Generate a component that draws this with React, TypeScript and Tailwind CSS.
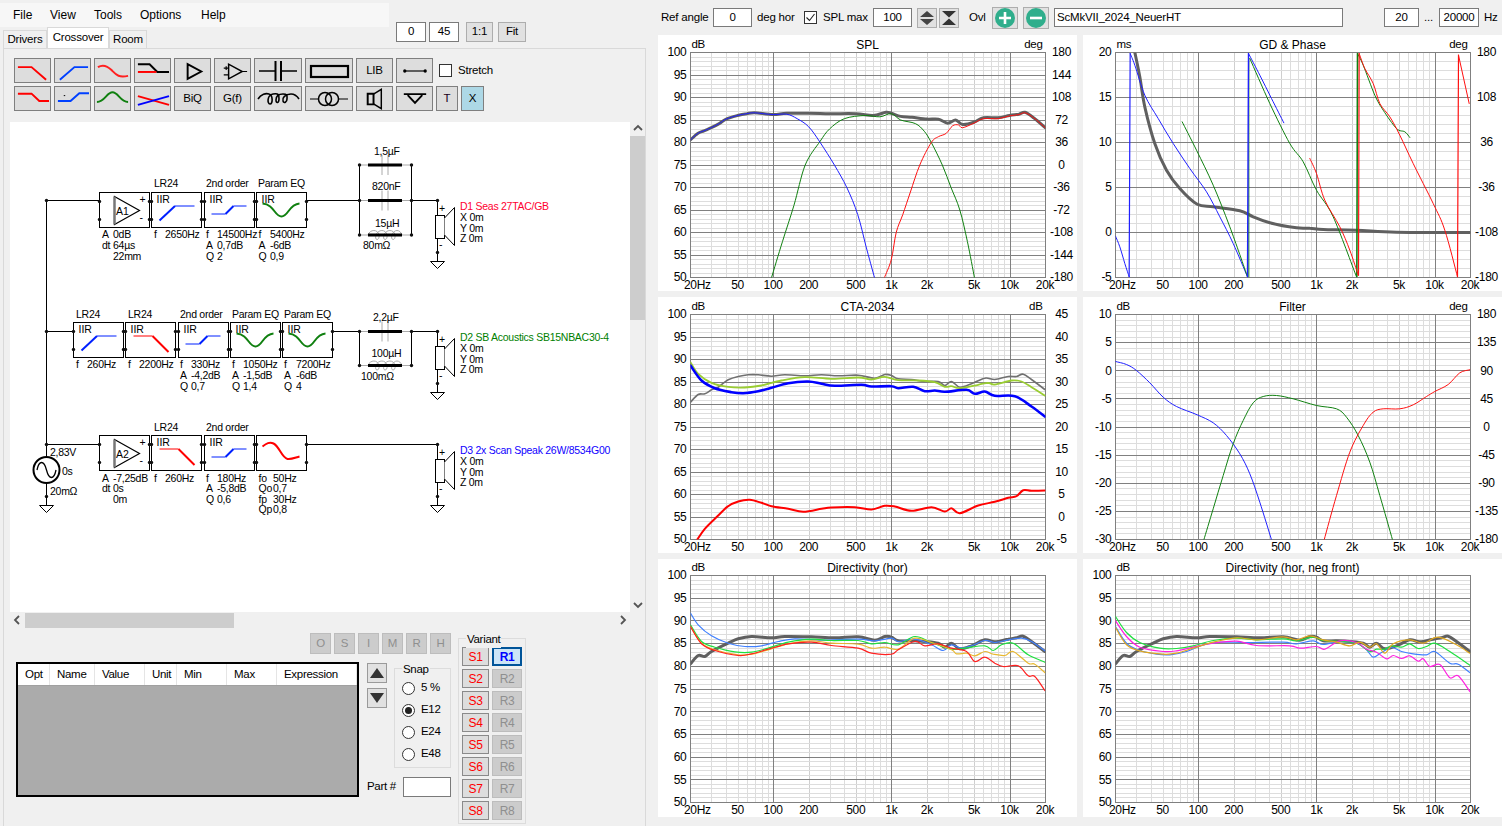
import type { ReactNode } from "react"

type Pt = [number, number]

interface Curve {
  pts: Pt[]
  color: string
  w?: number
}

interface ChartProps {
  title: string
  leftUnit: string
  rightUnit?: string
  left: number[]
  right?: number[]
  plotTop: number
  plotH: number
  height: number
  divs: number
  zy0: number
  curves: Curve[]
  id: string
}

const PL = 32.5
const PW = 355

function smooth(pts: Pt[]) {
  if (pts.length < 3) return `M${pts.map((p) => p.join(",")).join("L")}`
  let d = `M${pts[0][0]},${pts[0][1]}`
  for (let i = 0; i < pts.length - 1; i++) {
    const p0 = pts[i - 1] || pts[i]
    const p1 = pts[i]
    const p2 = pts[i + 1]
    const p3 = pts[i + 2] || p2
    const c1x = p1[0] + (p2[0] - p0[0]) / 6
    const c1y = p1[1] + (p2[1] - p0[1]) / 6
    const c2x = p2[0] - (p3[0] - p1[0]) / 6
    const c2y = p2[1] - (p3[1] - p1[1]) / 6
    d += `C${c1x.toFixed(1)},${c1y.toFixed(1)} ${c2x.toFixed(1)},${c2y.toFixed(1)} ${p2[0].toFixed(1)},${p2[1].toFixed(1)}`
  }
  return d
}

const fx = (f: number) => PL + 118.2 * Math.log10(f / 20)

const minorF = [30, 40, 50, 60, 70, 80, 90, 200, 300, 400, 500, 600, 700, 800, 900, 2000, 3000, 4000, 5000, 6000, 7000, 8000, 9000, 20000]
const freqLabels: [string, number][] = [
  ["50", 50],
  ["100", 100],
  ["200", 200],
  ["500", 500],
  ["1k", 1000],
  ["2k", 2000],
  ["5k", 5000],
  ["10k", 10000],
  ["20k", 20000],
]

function Chart({ title, leftUnit, rightUnit, left, right, plotTop, plotH, height, divs, zy0, curves, id }: ChartProps) {
  const hLines = []
  for (let i = 0; i <= divs * 5; i++) {
    const y = plotTop + Math.round((i * plotH) / (divs * 5))
    hLines.push(
      <line key={i} x1={PL} x2={PL + PW} y1={y} y2={y} stroke={i % 5 === 0 ? "#808080" : "#dddddd"} />,
    )
  }
  const bottom = plotTop + plotH
  return (
    <svg width="419" height={height} viewBox={`0 0 419 ${height}`} className="block bg-white">
      <g shapeRendering="crispEdges">
        {minorF.map((f) => (
          <line key={f} x1={Math.round(fx(f)) + 0.5} x2={Math.round(fx(f)) + 0.5} y1={plotTop} y2={bottom} stroke={f === 200 || f === 2000 || f === 500 || f === 5000 ? "#cfcfcf" : "#dddddd"} />
        ))}
        {hLines}
        {[100, 1000, 10000].map((f) => (
          <line key={f} x1={Math.round(fx(f)) + 0.5} x2={Math.round(fx(f)) + 0.5} y1={plotTop} y2={bottom} stroke="#808080" />
        ))}
        <rect x={PL} y={plotTop} width={PW} height={plotH} fill="none" stroke="#808080" />
      </g>
      <clipPath id={id}>
        <rect x={PL} y={plotTop} width={PW} height={plotH} />
      </clipPath>
      <g clipPath={`url(#${id})`} fill="none" strokeLinejoin="round" strokeLinecap="round">
        {curves.map((c, i) => (
          <path
            key={i}
            d={smooth(c.pts.map(([x, y]) => [PL + (x - 107) / 3, plotTop + (y - zy0) / 3] as Pt))}
            stroke={c.color}
            strokeWidth={c.w ?? 1}
          />
        ))}
      </g>
      <g fontSize="12" letterSpacing="-0.3" fill="#000">
        <text x="209.5" y={plotTop - 4} textAnchor="middle" letterSpacing="0">
          {title}
        </text>
        <text x={PL + 1} y={plotTop - 4.5} fontSize="11.5">
          {leftUnit}
        </text>
        {rightUnit && (
          <text x={PL + PW - 3} y={plotTop - 4.5} textAnchor="end" fontSize="11.5">
            {rightUnit}
          </text>
        )}
        {left.map((v, i) => (
          <text key={i} x={PL - 4} y={plotTop + (i * plotH) / (left.length - 1) + 3.8} textAnchor="end">
            {v}
          </text>
        ))}
        {right?.map((v, i) => (
          <text key={i} x={PL + PW + 16} y={plotTop + (i * plotH) / (right.length - 1) + 3.8} textAnchor="middle">
            {v}
          </text>
        ))}
        <text x={PL - 6.5} y={bottom + 11.5}>
          20Hz
        </text>
        {freqLabels.map(([l, f]) => (
          <text key={l} x={fx(f)} y={bottom + 11.5} textAnchor="middle">
            {l}
          </text>
        ))}
      </g>
    </svg>
  )
}

const db = (rows: Pt[]): Pt[] =>
  rows.map(([f, d]) => [107 + 3 * 118.2 * Math.log10(f / 20), 157 + 3 * 4.5 * (100 - d)])

const splGrey: Pt[] = [[20, 80.6], [23, 82], [26, 82.6], [30, 83.3], [35, 84.2], [40, 85.2], [50, 86], [60, 86.4], [70, 86.6], [100, 86.2], [130, 86.5], [200, 86.5], [300, 86.4], [500, 86.4], [700, 86], [900, 86.7], [1000, 86.5], [1200, 85.8], [1500, 85.6], [2000, 85.2], [2500, 85.2], [3000, 84.3], [3500, 85], [4000, 84], [5000, 84.5], [6000, 85.5], [8000, 85.5], [10000, 86], [12000, 86.3], [13500, 86.7], [16000, 85.5], [20000, 83.3]]
const splBlue: Pt[] = [[20, 80.6], [23, 82], [26, 82.6], [30, 83.3], [35, 84.2], [40, 85.2], [50, 86], [60, 86.4], [70, 86.6], [100, 86.2], [130, 86.3], [160, 85.3], [200, 83.5], [250, 80], [330, 75], [420, 70], [520, 64], [610, 57], [720, 50]]
const splGreen: Pt[] = [[97, 50], [120, 58], [150, 66], [187, 75], [250, 80.3], [300, 83], [400, 85.3], [600, 86], [800, 85.7], [1000, 86.4], [1200, 85], [1600, 84.2], [1900, 82.5], [2180, 80], [2700, 75], [3200, 70], [3800, 65], [4400, 58], [5050, 50]]
const splRed: Pt[] = [[875, 50], [1000, 54], [1100, 60], [1250, 64], [1450, 69], [1740, 75], [2180, 80], [2500, 81.3], [2900, 82], [3300, 83.7], [3700, 83.9], [4000, 83.3], [5000, 84.3], [6000, 85.3], [8000, 85.3], [10000, 85.9], [12000, 86.2], [13500, 86.6], [16000, 85.5], [20000, 83.3]]

const gdCurves: Curve[] = [
  { pts: [[165, 157], [180, 230], [195, 320], [225, 430], [260, 510], [300, 565], [352, 612], [400, 620], [480, 632], [520, 650], [570, 668], [650, 683], [690, 684], [730, 688], [830, 690], [950, 696], [1170, 697]], color: "#606060", w: 3 },
  { pts: [[107, 708], [120, 740], [135, 790], [148, 830]], color: "#2020ff" },
  { pts: [[148, 830], [151, 160]], color: "#2020ff", w: 1.2 },
  { pts: [[151, 160], [165, 195], [195, 285], [235, 355], [280, 430], [330, 505], [380, 575], [420, 650], [460, 730], [503, 830]], color: "#2020ff" },
  { pts: [[506, 160], [540, 225], [575, 295], [612, 368]], color: "#2020ff" },
  { pts: [[307, 365], [350, 450], [400, 555], [450, 680], [503, 830]], color: "#108010" },
  { pts: [[507, 830], [507, 175]], color: "#108010" },
  { pts: [[503, 830], [506, 160]], color: "#2020ff", w: 1.4 },
  { pts: [[510, 175], [570, 310], [630, 430], [670, 485], [710, 570], [760, 650], [830, 830]], color: "#108010" },
  { pts: [[831, 830], [833, 160]], color: "#108010", w: 1.6 },
  { pts: [[833, 160], [850, 195], [885, 285], [910, 330], [950, 385], [975, 395], [990, 412]], color: "#108010" },
  { pts: [[690, 475], [710, 520], [735, 600], [780, 680], [810, 750], [835, 825]], color: "#ff1010" },
  { pts: [[836, 825], [838, 160]], color: "#ff1010", w: 1.2 },
  { pts: [[838, 160], [855, 205], [880, 250], [900, 310], [930, 350], [960, 405], [1000, 490], [1060, 610], [1095, 690], [1133, 830]], color: "#ff1010" },
  { pts: [[1133, 830], [1136, 165]], color: "#ff1010", w: 1.2 },
  { pts: [[1136, 165], [1168, 310]], color: "#ff1010" },
]

const ctaCurves: Curve[] = [
  { pts: [[107, 320], [130, 297], [150, 295], [170, 283], [190, 275], [220, 253], [250, 243], [280, 238], [310, 238], [350, 242], [390, 238], [450, 241], [500, 238], [550, 241], [610, 239], [660, 248], [690, 237], [710, 240], [730, 250], [770, 252], [810, 258], [850, 258], [870, 270], [890, 258], [915, 275], [950, 265], [990, 248], [1020, 252], [1060, 243], [1085, 243], [1105, 236], [1130, 252], [1170, 282]], color: "#707070", w: 1.6 },
  { pts: [[107, 200], [130, 235], [170, 262], [220, 274], [270, 276], [320, 270], [380, 255], [450, 245], [530, 250], [610, 246], [650, 252], [690, 244], [730, 254], [790, 255], [840, 260], [870, 274], [890, 272], [915, 278], [970, 268], [1000, 262], [1020, 267], [1070, 255], [1100, 258], [1130, 275], [1170, 300]], color: "#9acd32", w: 1.8 },
  { pts: [[107, 210], [140, 255], [180, 278], [230, 290], [265, 293], [310, 287], [350, 277], [400, 263], [460, 258], [500, 265], [540, 271], [620, 268], [650, 273], [710, 272], [730, 278], [775, 274], [810, 287], [840, 285], [870, 289], [935, 283], [960, 295], [990, 288], [1020, 301], [1080, 302], [1130, 333], [1170, 363]], color: "#0000ff", w: 2.6 },
  { pts: [[127, 733], [150, 700], [190, 660], [220, 632], [250, 618], [285, 613], [320, 622], [350, 632], [400, 640], [445, 649], [500, 640], [530, 636], [600, 635], [650, 642], [690, 631], [720, 633], [770, 646], [830, 635], [870, 648], [890, 638], [915, 653], [970, 630], [1020, 619], [1060, 607], [1085, 602], [1105, 584], [1130, 586], [1170, 585]], color: "#ff0000", w: 2 },
]

const filterCurves: Curve[] = [
  { pts: [[107, 198], [140, 207], [170, 225], [210, 262], [250, 305], [290, 333], [352, 358], [400, 382], [440, 420], [480, 475], [510, 535], [540, 620], [575, 733]], color: "#2020ff" },
  { pts: [[372, 733], [400, 640], [430, 540], [460, 445], [490, 375], [520, 322], [550, 303], [590, 300], [640, 310], [710, 330], [770, 340], [800, 365], [835, 420], [870, 500], [900, 600], [938, 733]], color: "#108010" },
  { pts: [[733, 733], [770, 600], [810, 470], [850, 390], [880, 350], [910, 340], [960, 340], [1000, 328], [1040, 303], [1065, 288], [1105, 267], [1140, 232], [1170, 223]], color: "#ff1010" },
]

const dirGrey: Curve = {
  pts: [[107, 312], [130, 287], [150, 290], [170, 275], [220, 250], [250, 237], [290, 230], [350, 234], [390, 230], [470, 231], [540, 234], [610, 231], [660, 241], [690, 230], [710, 232], [730, 243], [770, 243], [810, 245], [850, 250], [870, 262], [890, 250], [915, 267], [950, 258], [990, 240], [1020, 246], [1060, 238], [1085, 234], [1105, 229], [1130, 245], [1170, 275]],
  color: "#606060",
  w: 3,
}

const dirHor: Curve[] = [
  dirGrey,
  { pts: [[107, 160], [130, 195], [170, 228], [220, 250], [270, 260], [320, 258], [370, 245], [420, 237], [500, 241], [610, 238], [660, 243], [710, 235], [730, 245], [780, 238], [830, 255], [865, 272], [890, 255], [920, 265], [950, 258], [990, 242], [1020, 248], [1060, 240], [1100, 235], [1130, 245], [1170, 273]], color: "#4080ff", w: 1.2 },
  { pts: [[107, 195], [140, 245], [180, 262], [240, 276], [290, 277], [340, 265], [400, 247], [470, 238], [530, 242], [610, 242], [650, 252], [690, 248], [730, 255], [780, 230], [830, 248], [890, 268], [930, 265], [990, 258], [1015, 272], [1040, 255], [1075, 250], [1120, 285], [1170, 307]], color: "#20e040", w: 1.2 },
  { pts: [[107, 200], [140, 250], [180, 270], [250, 285], [290, 283], [340, 270], [400, 252], [470, 243], [530, 250], [610, 253], [650, 265], [690, 262], [730, 268], [780, 235], [830, 248], [890, 270], [905, 282], [935, 280], [960, 288], [990, 275], [1015, 283], [1050, 287], [1075, 275], [1120, 310], [1140, 313], [1170, 338]], color: "#e8b830", w: 1.2 },
  { pts: [[107, 200], [140, 252], [180, 272], [250, 287], [290, 282], [340, 268], [400, 252], [470, 247], [530, 257], [610, 265], [650, 280], [710, 283], [730, 270], [780, 245], [810, 258], [850, 252], [890, 265], [935, 275], [960, 305], [990, 292], [1020, 310], [1045, 320], [1090, 318], [1120, 348], [1140, 350], [1170, 392]], color: "#ff2020", w: 1.2 },
]

const dirNeg: Curve[] = [
  dirGrey,
  { pts: [[107, 200], [140, 250], [180, 272], [230, 283], [270, 285], [320, 275], [370, 255], [420, 247], [500, 248], [610, 247], [650, 252], [700, 243], [730, 254], [780, 245], [830, 250], [860, 270], [880, 292], [905, 278], [935, 263], [965, 275], [1000, 282], [1040, 285], [1065, 275], [1110, 310], [1135, 313], [1170, 338]], color: "#4080ff", w: 1.2 },
  { pts: [[107, 170], [140, 218], [180, 248], [240, 265], [290, 266], [340, 258], [400, 242], [470, 235], [530, 240], [610, 237], [650, 243], [700, 232], [730, 242], [780, 245], [830, 250], [870, 275], [890, 268], [915, 268], [935, 258], [965, 262], [990, 252], [1015, 266], [1040, 260], [1065, 250], [1110, 275], [1170, 316]], color: "#20e040", w: 1.2 },
  { pts: [[107, 183], [140, 230], [180, 262], [250, 275], [290, 273], [340, 262], [400, 250], [470, 244], [530, 257], [630, 258], [660, 265], [710, 260], [735, 268], [780, 243], [830, 248], [860, 268], [890, 277], [920, 297], [940, 287], [965, 296], [990, 288], [1015, 304], [1030, 297], [1050, 320], [1080, 314], [1110, 354], [1135, 348], [1170, 395]], color: "#ff20e0", w: 1.2 },
  { pts: [[107, 203], [140, 255], [180, 273], [250, 283], [290, 280], [340, 265], [400, 247], [470, 234], [530, 240], [610, 231], [650, 240], [690, 228], [730, 240], [770, 247], [810, 258], [840, 247], [870, 262], [890, 252], [915, 280], [940, 252], [990, 240], [1030, 250], [1075, 232], [1130, 255], [1170, 280]], color: "#e0a820", w: 1.2 },
]

const spl100 = [100, 95, 90, 85, 80, 75, 70, 65, 60, 55, 50]

function Btn({ className, bg = "bg-[#dddddd]", children }: { className: string; bg?: string; children?: ReactNode }) {
  return (
    <div className={`flex items-center justify-center border border-[#7f7f7f] ${bg} text-[11.5px] tracking-[-0.2px] h-[25px] ${className}`}>
      {children}
    </div>
  )
}

function Ico({ w = 36, children }: { w?: number; children: ReactNode }) {
  return (
    <svg width={w} height="24" viewBox={`0 0 ${w} 24`} fill="none" strokeWidth="2">
      {children}
    </svg>
  )
}

function Toolbar() {
  return (
    <div className="flex flex-col gap-[3px] pl-[10px] pt-[9px]">
      <div className="flex gap-[3px] items-center">
        <Btn className="w-[37px]"><Ico><path d="M3 8H17L32 21" stroke="#ff0000" /></Ico></Btn>
        <Btn className="w-[37px]"><Ico><path d="M5 21L20 8H34" stroke="#0040ff" /></Ico></Btn>
        <Btn className="w-[37px]"><Ico><path d="M3 8C8 5 12 6 17 11S24 19 34 17" stroke="#ff2020" /></Ico></Btn>
        <Btn className="w-[37px]"><Ico><path d="M3 5H15L23 13H35" stroke="#000" /><path d="M3 13H22" stroke="#ff0000" /></Ico></Btn>
        <Btn className="w-[37px]"><Ico><path d="M13 5V20L27 12.5Z" stroke="#000" /></Ico></Btn>
        <Btn className="w-[37px]"><Ico><path d="M14 5V20L28 12.5Z" stroke="#000" strokeWidth="1.5" /><path d="M9 9H14M9 16H14M11.5 7V11M28 12.5H33" stroke="#000" strokeWidth="1.2" /></Ico></Btn>
        <Btn className="w-[48px]"><Ico w={46}><path d="M4 12H20M26 12H42" stroke="#000" strokeWidth="1.3" /><path d="M20.5 2V22M26 2V22" stroke="#000" /></Ico></Btn>
        <Btn className="w-[48px]"><Ico w={46}><rect x="5" y="7" width="37" height="11" stroke="#000" strokeWidth="2.2" /></Ico></Btn>
        <Btn className="w-[37px]">LIB</Btn>
        <Btn className="w-[37px]"><Ico><path d="M8 12H29" stroke="#000" strokeWidth="1.2" /><circle cx="8" cy="12" r="1.7" fill="#000" strokeWidth="0" /><circle cx="29" cy="12" r="1.7" fill="#000" strokeWidth="0" /></Ico></Btn>
        <div className="ml-[3px] w-[13px] h-[13px] border border-[#333] bg-white" />
        <span className="ml-[3px] text-[11.5px] tracking-[-0.2px]">Stretch</span>
      </div>
      <div className="flex gap-[3px] items-center">
        <Btn className="w-[37px]"><Ico><path d="M3 6.5H17L25 14H35" stroke="#ff0000" /></Ico></Btn>
        <Btn className="w-[37px]"><Ico><path d="M3 14H16L25 6H35" stroke="#0040ff" /><path d="M9 8.5H10.5" stroke="#000" strokeWidth="1" /></Ico></Btn>
        <Btn className="w-[37px]"><Ico><path d="M2 15C10 15 12 5 18 5S26 15 34 15" stroke="#108010" /></Ico></Btn>
        <Btn className="w-[37px]"><Ico><path d="M3 9L35 18" stroke="#ff0000" /><path d="M3 18L35 9" stroke="#0000ff" /></Ico></Btn>
        <Btn className="w-[37px]">BiQ</Btn>
        <Btn className="w-[37px]">G(f)</Btn>
        <Btn className="w-[48px]"><Ico w={46}><path d="M3 12C6 7 11 6 14 7C18 8 18 17 15 17S12 8 18 7S24 8 24 12S21 17 21 13S23 7 28 7S32 9 32 12S29 17 28 14S30 7 36 7C40 7 42 9 44 12" stroke="#000" strokeWidth="1.6" /></Ico></Btn>
        <Btn className="w-[48px]"><Ico w={46}><path d="M4 12H13M33 12H42" stroke="#000" strokeWidth="1.2" /><circle cx="19" cy="12" r="6.5" stroke="#000" strokeWidth="1.5" /><circle cx="26" cy="12" r="6.5" stroke="#000" strokeWidth="1.5" /></Ico></Btn>
        <Btn className="w-[37px]"><Ico><path d="M11 6.5H17V17.5H11Z" stroke="#000" strokeWidth="2" /><path d="M17 7L25 2V22L17 17" stroke="#000" strokeWidth="1.5" /></Ico></Btn>
        <Btn className="w-[37px]"><Ico><path d="M7 7H30M11 8L18.5 16L26 8" stroke="#000" /></Ico></Btn>
        <Btn className="w-[22px] text-[#1a001a]">T</Btn>
        <Btn className="w-[23px]" bg="bg-[#add8e6]">X</Btn>
      </div>
    </div>
  )
}

function L({ x, y, c = "#000", children }: { x: number; y: number; c?: string; children: ReactNode }) {
  return (
    <text x={x} y={y} fill={c} fontSize="10.5" letterSpacing="-0.27">
      {children}
    </text>
  )
}

function Dot({ x, y }: { x: number; y: number }) {
  return <circle cx={x} cy={y} r="1.7" fill="#111" />
}

function Block({ x, y, children }: { x: number; y: number; children?: ReactNode }) {
  return (
    <g transform={`translate(${x} ${y})`}>
      <rect width="50" height="35" fill="#fff" stroke="#000" />
      {children}
      <Dot x={0} y={9} />
      <Dot x={0} y={27} />
      <Dot x={50} y={9} />
      <Dot x={50} y={27} />
    </g>
  )
}

const Iir = () => (
  <text x="5" y="10" fontSize="10.5" fill="#000" stroke="none">
    IIR
  </text>
)
const Hp = () => (
  <g fill="none">
    <Iir />
    <path d="M8 28L23.5 13.5" stroke="#0020ff" strokeWidth="2" />
    <path d="M23.5 13.5H43" stroke="#0020ff" />
  </g>
)
const Lp = () => (
  <g fill="none">
    <Iir />
    <path d="M8 13.5H27" stroke="#ff0000" />
    <path d="M27 13.5L43 29.5" stroke="#ff0000" strokeWidth="2" />
  </g>
)
const Shelf = () => (
  <g fill="none">
    <Iir />
    <path d="M7 21.5H21M29 13.5H42" stroke="#0020ff" />
    <path d="M21 21.5L29 13.5" stroke="#0020ff" strokeWidth="2" />
  </g>
)
const Eq = () => (
  <g fill="none">
    <Iir />
    <path d="M6 11C18 12 18 24 25 24S32 12 43 11" stroke="#108010" strokeWidth="2" />
  </g>
)

function Amp({ label }: { label: string }) {
  return (
    <g>
      <path d="M15 4V32L40 18Z" fill="none" stroke="#000" strokeWidth="1.2" />
      <path d="M15 4V32" stroke="#777" strokeWidth="2.4" />
      <text x="16.5" y="22" fontSize="10.5">{label}</text>
      <text x="40" y="10" fontSize="10.5">+</text>
      <text x="40" y="28" fontSize="10.5">-</text>
    </g>
  )
}

function Speaker({ dy, name, color }: { dy: number; name: string; color: string }) {
  return (
    <g transform={`translate(0 ${dy})`}>
      <path d="M437.5 200.5V252.5" stroke="#000" />
      <rect x="435.5" y="215.5" width="9" height="23" fill="#fff" stroke="#000" />
      <path d="M444.5 218L454.5 207.5V245.5L444.5 235" fill="#fff" stroke="#000" />
      <path d="M437.5 252.5V261" stroke="#000" />
      <path d="M430.5 261.5H444.5L437.5 268.5Z" fill="#fff" stroke="#000" />
      <Dot x={437.5} y={200.5} />
      <Dot x={437.5} y={252.5} />
      <L x={439} y={212}>+</L>
      <L x={439} y={248}>-</L>
      <L x={460} y={210} c={color}>{name}</L>
      <L x={460} y={221}>X  0m</L>
      <L x={460} y={231.5}>Y  0m</L>
      <L x={460} y={242}>Z  0m</L>
    </g>
  )
}

function Cap({ y }: { y: number }) {
  return (
    <g>
      <path d={`M359 ${y}H411`} stroke="#aaa" />
      <path d={`M382 ${y - 10}V${y + 10}M388 ${y - 10}V${y + 10}`} stroke="#aaa" />
      <rect x="368" y={y - 1.5} width="34" height="3" fill="#000" />
    </g>
  )
}

function Coil({ y }: { y: number }) {
  return (
    <g>
      <path d={`M359 ${y}H411`} stroke="#aaa" />
      <path d={`M368 ${y}C370 ${y - 6} 378 ${y - 6} 379 ${y}C380 ${y + 6} 374 ${y + 6} 376 ${y}C378 ${y - 6} 386 ${y - 6} 387 ${y}C388 ${y + 6} 382 ${y + 6} 384 ${y}C386 ${y - 6} 394 ${y - 6} 395 ${y}C396 ${y + 6} 390 ${y + 6} 392 ${y}C394 ${y - 6} 400 ${y - 6} 402 ${y}`} fill="none" stroke="#aaa" />
      <rect x="368" y={y - 1.5} width="34" height="3" fill="#000" />
    </g>
  )
}

function Schematic() {
  return (
    <svg width="620" height="490" viewBox="10 122 620 490" className="block bg-white">
      <g>
        <path d="M46.5 200.5V496.5M46.5 200.5H99M46.5 331.5H73M46.5 444.5H99" stroke="#000" fill="none" />
        <path d="M307 200.5H359M411 200.5H437.5M332 331.5H359M411 331.5H437.5M307 444.5H437.5" stroke="#000" fill="none" />
        <path d="M359.5 165V235M411.5 165V235M359.5 331.5V365.5M411.5 331.5V365.5" stroke="#000" fill="none" />
      </g>
      <Dot x={46.5} y={200.5} />
      <Dot x={46.5} y={331.5} />
      <Dot x={46.5} y={444.5} />

      <Block x={99.5} y={192.5}><Amp label="A1" /></Block>
      <Block x={151.5} y={192.5}><Hp /></Block>
      <Block x={204.5} y={192.5}><Shelf /></Block>
      <Block x={256.5} y={192.5}><Eq /></Block>

      <Block x={73.5} y={322.5}><Hp /></Block>
      <Block x={125.5} y={322.5}><Lp /></Block>
      <Block x={178.5} y={322.5}><Shelf /></Block>
      <Block x={230.5} y={322.5}><Eq /></Block>
      <Block x={282.5} y={322.5}><Eq /></Block>

      <Block x={99.5} y={435.5}><Amp label="A2" /></Block>
      <Block x={151.5} y={435.5}><Lp /></Block>
      <Block x={204.5} y={435.5}><Shelf /></Block>
      <Block x={256.5} y={435.5}>
        <path d="M6 11C10 8 13 6 17 8C23 11 25 22 31 23.5C35 24 39 22 43 21" fill="none" stroke="#ff0000" strokeWidth="2" />
      </Block>

      <Cap y={165} />
      <Cap y={200.5} />
      <Coil y={235} />
      <Cap y={331.5} />
      <Coil y={365.5} />
      {[[359.5, 165], [411.5, 165], [359.5, 200.5], [411.5, 200.5], [359.5, 235], [411.5, 235], [359.5, 331.5], [411.5, 331.5], [359.5, 365.5], [411.5, 365.5]].map(([x, y]) => (
        <Dot key={`${x}-${y}`} x={x} y={y} />
      ))}

      <Speaker dy={0} name="D1 Seas 27TAC/GB" color="#ff0030" />
      <Speaker dy={131} name="D2 SB Acoustics SB15NBAC30-4" color="#008000" />
      <Speaker dy={244} name="D3 2x Scan Speak 26W/8534G00" color="#1000ff" />

      <circle cx="46.5" cy="470" r="13" fill="#fff" stroke="#000" strokeWidth="2" />
      <path d="M37 470C39 460 44 460 46.5 470S54 480 56 470" fill="none" stroke="#000" strokeWidth="1.3" />
      <Dot x={46.5} y={496.5} />
      <path d="M39.5 505.5H53.5L46.5 512.5Z" fill="#fff" stroke="#000" />
      <path d="M46.5 496.5V505.5" stroke="#000" />

      <L x={50} y={456}>2,83V</L>
      <L x={62} y={475}>0s</L>
      <L x={50} y={495}>20mΩ</L>

      {/* row 1 */}
      <L x={154} y={187}>LR24</L>
      <L x={206} y={187}>2nd order</L>
      <L x={258} y={187}>Param EQ</L>
      <L x={102} y={238}>A</L><L x={113} y={238}>0dB</L>
      <L x={102} y={249}>dt</L><L x={113} y={249}>64µs</L>
      <L x={113} y={259.5}>22mm</L>
      <L x={154} y={238}>f</L><L x={165} y={238}>2650Hz</L>
      <L x={206} y={238}>f</L><L x={217} y={238}>14500Hz</L>
      <L x={206} y={249}>A</L><L x={217} y={249}>0,7dB</L>
      <L x={206} y={259.5}>Q</L><L x={217} y={259.5}>2</L>
      <L x={258.5} y={238}>f</L><L x={270} y={238}>5400Hz</L>
      <L x={258.5} y={249}>A</L><L x={270} y={249}>-6dB</L>
      <L x={258.5} y={259.5}>Q</L><L x={270} y={259.5}>0,9</L>
      <L x={374} y={154.5}>1,5µF</L>
      <L x={372} y={189.5}>820nF</L>
      <L x={375} y={226.5}>15µH</L>
      <L x={363} y={249}>80mΩ</L>

      {/* row 2 */}
      <L x={76} y={317.5}>LR24</L>
      <L x={128} y={317.5}>LR24</L>
      <L x={180} y={317.5}>2nd order</L>
      <L x={232} y={317.5}>Param EQ</L>
      <L x={284} y={317.5}>Param EQ</L>
      <L x={76} y={368}>f</L><L x={87} y={368}>260Hz</L>
      <L x={128} y={368}>f</L><L x={139} y={368}>2200Hz</L>
      <L x={180} y={368}>f</L><L x={191} y={368}>330Hz</L>
      <L x={180} y={379}>A</L><L x={191} y={379}>-4,2dB</L>
      <L x={180} y={389.5}>Q</L><L x={191} y={389.5}>0,7</L>
      <L x={232} y={368}>f</L><L x={243} y={368}>1050Hz</L>
      <L x={232} y={379}>A</L><L x={243} y={379}>-1,5dB</L>
      <L x={232} y={389.5}>Q</L><L x={243} y={389.5}>1,4</L>
      <L x={284} y={368}>f</L><L x={296} y={368}>7200Hz</L>
      <L x={284} y={379}>A</L><L x={296} y={379}>-6dB</L>
      <L x={284} y={389.5}>Q</L><L x={296} y={389.5}>4</L>
      <L x={373} y={320.5}>2,2µF</L>
      <L x={371.5} y={356.5}>100µH</L>
      <L x={361} y={380}>100mΩ</L>

      {/* row 3 */}
      <L x={154} y={430.5}>LR24</L>
      <L x={206} y={430.5}>2nd order</L>
      <L x={102} y={481.5}>A</L><L x={113} y={481.5}>-7,25dB</L>
      <L x={102} y={491.5}>dt</L><L x={113} y={491.5}>0s</L>
      <L x={113} y={502.5}>0m</L>
      <L x={154} y={481.5}>f</L><L x={165} y={481.5}>260Hz</L>
      <L x={206} y={481.5}>f</L><L x={217} y={481.5}>180Hz</L>
      <L x={206} y={491.5}>A</L><L x={217} y={491.5}>-5,8dB</L>
      <L x={206} y={502.5}>Q</L><L x={217} y={502.5}>0,6</L>
      <L x={258.5} y={481.5}>fo</L><L x={273} y={481.5}>50Hz</L>
      <L x={258.5} y={491.5}>Qo</L><L x={273} y={491.5}>0,7</L>
      <L x={258.5} y={502.5}>fp</L><L x={273} y={502.5}>30Hz</L>
      <L x={258.5} y={513}>Qp</L><L x={273} y={513}>0,8</L>
    </svg>
  )
}

function Chevron({ dir }: { dir: "up" | "down" | "left" | "right" }) {
  const d = {
    up: "M2 7L6 3L10 7",
    down: "M2 4L6 8L10 4",
    left: "M7 2L3 6L7 10",
    right: "M4 2L8 6L4 10",
  }[dir]
  return (
    <svg width="12" height="12" viewBox="0 0 12 12" fill="none">
      <path d={d} stroke="#555" strokeWidth="1.8" />
    </svg>
  )
}

function Radio({ label, on }: { label: string; on?: boolean }) {
  return (
    <div className="flex items-center gap-[6px] h-[22px]">
      <div className="w-[13px] h-[13px] rounded-full border border-[#333] bg-white flex items-center justify-center">
        {on && <div className="w-[7px] h-[7px] rounded-full bg-[#222]" />}
      </div>
      <span>{label}</span>
    </div>
  )
}

const columns: [string, string][] = [
  ["Opt", "w-[32px]"],
  ["Name", "w-[45px]"],
  ["Value", "w-[50px]"],
  ["Unit", "w-[32px]"],
  ["Min", "w-[50px]"],
  ["Max", "w-[50px]"],
  ["Expression", "flex-1"],
]

function LowerPanel() {
  return (
    <div className="flex flex-1 pl-[12px] text-[11.5px] tracking-[-0.3px]">
      <div className="w-[435px] flex flex-col">
        <div className="flex justify-end gap-[3px] mt-[5px] h-[21px]">
          {["O", "S", "I", "M", "R", "H"].map((t) => (
            <div key={t} className="w-[21px] h-[21px] flex items-center justify-center bg-[#cccccc] border border-[#bdbdbd] text-[#8f8f8f]">
              {t}
            </div>
          ))}
        </div>
        <div className="flex mt-[8px]">
          <div className="w-[343px] h-[135px] border-2 border-black bg-[#ababab]">
            <div className="flex h-[22px] bg-white border-b border-[#a0a0a0]">
              {columns.map(([c, w]) => (
                <div key={c} className={`${w} flex items-center pl-[7px] border-r border-[#e5e5e5]`}>
                  {c}
                </div>
              ))}
            </div>
          </div>
          <div className="ml-[8px] w-[84px] flex flex-col">
            <div className="flex h-[106px]">
              <div className="flex flex-col gap-[5px] mt-[1px] w-[20px]">
                <div className="w-[20px] h-[20px] border border-[#9a9a9a] bg-[#e1e1e1] flex items-center justify-center">
                  <svg width="14" height="10" viewBox="0 0 14 10"><path d="M7 0L14 10H0Z" fill="#333" /></svg>
                </div>
                <div className="w-[20px] h-[20px] border border-[#9a9a9a] bg-[#e1e1e1] flex items-center justify-center">
                  <svg width="14" height="10" viewBox="0 0 14 10"><path d="M7 10L14 0H0Z" fill="#333" /></svg>
                </div>
              </div>
              <div className="relative ml-[7px] mt-[6px] w-[57px] h-[100px] border border-[#dcdcdc] pl-[7px] pt-[8px]">
                <span className="absolute left-[7px] top-[-8px] bg-[#f0f0f0] px-[1px]">Snap</span>
                <Radio label="5 %" />
                <Radio label="E12" on />
                <Radio label="E24" />
                <Radio label="E48" />
              </div>
            </div>
            <div className="flex items-center mt-[9px]">
              <span className="w-[36px]">Part #</span>
              <div className="w-[48px] h-[20px] border border-[#7a7a7a] bg-white" />
            </div>
          </div>
        </div>
      </div>
      <div className="relative ml-[7px] mt-[10px] w-[68px] h-[186px] border border-[#dcdcdc] pl-[3px] pt-[8px]">
        <span className="absolute left-[7px] top-[-8px] bg-[#f0f0f0] px-[1px]">Variant</span>
        <div className="grid grid-cols-[27px_30px] gap-x-[3px] gap-y-[3px]">
          {[1, 2, 3, 4, 5, 6, 7, 8].map((n) => (
            <div key={n} className="contents">
              <div className="h-[19px] flex items-center justify-center bg-[#dddddd] border border-[#8a8a8a] text-[#ff0000] text-[12px]">
                S{n}
              </div>
              {n === 1 ? (
                <div className="h-[19px] flex items-center justify-center bg-[#cce4f7] border-2 border-[#005499] text-[#0000ff] font-bold text-[12px]">
                  R1
                </div>
              ) : (
                <div className="h-[19px] flex items-center justify-center bg-[#cccccc] border border-[#bdbdbd] text-[#8f8f8f] text-[12px]">
                  R{n}
                </div>
              )}
            </div>
          ))}
        </div>
      </div>
    </div>
  )
}

function LeftColumn() {
  return (
    <div className="w-[648px] h-full flex flex-col">
      <div className="flex h-[48px]">
        <div className="w-[389px] pt-[3px] flex flex-col">
          <div className="flex h-[24px] bg-[#f7f7f7] items-center pl-[13px] text-[12px]">
            <span className="w-[37px]">File</span>
            <span className="w-[44px]">View</span>
            <span className="w-[46px]">Tools</span>
            <span className="w-[61px]">Options</span>
            <span>Help</span>
          </div>
          <div className="flex items-end pl-[3px] h-[21px] text-[11.5px] tracking-[-0.2px]">
            <div className="w-[44px] h-[18px] flex items-center justify-center border border-b-0 border-[#d9d9d9] bg-[#f0f0f0]">Drivers</div>
            <div className="w-[62px] h-[21px] flex items-center justify-center border border-b-0 border-[#d9d9d9] bg-white">Crossover</div>
            <div className="w-[38px] h-[18px] flex items-center justify-center border border-b-0 border-[#d9d9d9] bg-[#f0f0f0]">Room</div>
          </div>
        </div>
        <div className="flex pl-[7px] pt-[22px] text-[11.5px] tracking-[-0.2px]">
          <div className="w-[30px] h-[20px] flex items-center justify-center border border-[#7a7a7a] bg-white">0</div>
          <div className="ml-[3px] w-[30px] h-[20px] flex items-center justify-center border border-[#7a7a7a] bg-white">45</div>
          <div className="ml-[7px] w-[27px] h-[20px] flex items-center justify-center border border-[#adadad] bg-[#e1e1e1]">1:1</div>
          <div className="ml-[5px] w-[28px] h-[20px] flex items-center justify-center border border-[#adadad] bg-[#e1e1e1]">Fit</div>
        </div>
      </div>
      <div className="flex-1 ml-[3px] mr-[2px] border-t border-l border-r border-[#d9d9d9] flex flex-col min-h-0">
        <Toolbar />
        <div className="flex ml-[6px] mt-[11px]">
          <Schematic />
          <div className="w-[15px] h-[490px] flex flex-col items-center relative">
            <div className="h-[14px] flex items-center"><Chevron dir="up" /></div>
            <div className="w-[15px] h-[184px] bg-[#cdcdcd]" />
            <div className="flex-1" />
            <div className="h-[14px] flex items-center"><Chevron dir="down" /></div>
          </div>
        </div>
        <div className="flex items-center ml-[6px] w-[620px] h-[16px]">
          <div className="w-[15px] flex justify-center"><Chevron dir="left" /></div>
          <div className="w-[209px] h-[15px] bg-[#cdcdcd]" />
          <div className="flex-1" />
          <div className="w-[15px] flex justify-center"><Chevron dir="right" /></div>
        </div>
        <LowerPanel />
      </div>
    </div>
  )
}

function TopBar() {
  const field = "flex items-center justify-center h-[19px] border border-[#7a7a7a] bg-white text-center"
  return (
    <div className="flex items-center h-[35px] pl-[3px] text-[11.5px] tracking-[-0.2px] whitespace-nowrap">
      <span className="w-[52px]">Ref angle</span>
      <div className={`${field} w-[39px]`}>0</div>
      <span className="ml-[5px] w-[42px]">deg hor</span>
      <div className="ml-[5px] w-[13px] h-[13px] border border-[#333] bg-white flex items-center justify-center">
        <svg width="11" height="11" viewBox="0 0 11 11" fill="none"><path d="M1.5 5.5L4.5 8.5L9.5 2" stroke="#222" strokeWidth="1.1" /></svg>
      </div>
      <span className="ml-[6px] w-[44px]">SPL max</span>
      <div className={`${field} ml-[6px] w-[39px]`}>100</div>
      <div className="ml-[5px] w-[20px] h-[20px] border border-[#adadad] bg-[#e1e1e1] flex items-center justify-center">
        <svg width="16" height="16" viewBox="0 0 16 16"><path d="M8 1L15 7H1ZM1 9H15L8 15Z" fill="#444" /></svg>
      </div>
      <div className="ml-[2px] w-[20px] h-[20px] border border-[#adadad] bg-[#e1e1e1] flex items-center justify-center">
        <svg width="16" height="16" viewBox="0 0 16 16"><path d="M1 1H15L8 7.5ZM8 8.5L15 15H1Z" fill="#333" /></svg>
      </div>
      <span className="ml-[10px] w-[23px]">Ovl</span>
      <div className="w-[26px] h-[22px] border border-[#adadad] bg-[#e1e1e1] flex items-center justify-center">
        <svg width="20" height="20" viewBox="0 0 20 20"><circle cx="10" cy="10" r="10" fill="#2fae8c" /><path d="M10 4V16M4 10H16" stroke="#fff" strokeWidth="2.6" /></svg>
      </div>
      <div className="ml-[5px] w-[26px] h-[22px] border border-[#adadad] bg-[#e1e1e1] flex items-center justify-center">
        <svg width="20" height="20" viewBox="0 0 20 20"><circle cx="10" cy="10" r="10" fill="#2fae8c" /><path d="M4 10H16" stroke="#fff" strokeWidth="2.6" /></svg>
      </div>
      <div className="ml-[5px] w-[289px] h-[19px] border border-[#7a7a7a] bg-white flex items-center pl-[2px]">ScMkVII_2024_NeuerHT</div>
      <div className={`${field} ml-[41px] w-[35px]`}>20</div>
      <span className="ml-[5px] w-[15px]">...</span>
      <div className={`${field} w-[40px]`}>20000</div>
      <span className="ml-[5px]">Hz</span>
    </div>
  )
}

export default function App() {
  return (
    <div className="flex w-[1502px] h-[826px] overflow-hidden bg-[#f0f0f0] text-black [font-family:'Liberation_Sans',sans-serif]">
      <LeftColumn />
      <div className="ml-[10px] flex-1 flex flex-col">
        <TopBar />
        <div className="grid grid-cols-[419px_419px] gap-[6px]">
          <Chart
            id="spl"
            title="SPL"
            leftUnit="dB"
            rightUnit="deg"
            left={spl100}
            right={[180, 144, 108, 72, 36, 0, -36, -72, -108, -144, -180]}
            plotTop={17.5}
            plotH={225}
            height={256}
            divs={10}
            zy0={157}
            curves={[
              { pts: db(splGrey), color: "#606060", w: 3 },
              { pts: db(splGreen), color: "#108010" },
              { pts: db(splRed), color: "#ff1010" },
              { pts: db(splBlue), color: "#2020ff" },
            ]}
          />
          <Chart
            id="gd"
            title="GD & Phase"
            leftUnit="ms"
            rightUnit="deg"
            left={[20, 15, 10, 5, 0, -5]}
            right={[180, 108, 36, -36, -108, -180]}
            plotTop={17.5}
            plotH={225}
            height={256}
            divs={5}
            zy0={157}
            curves={gdCurves}
          />
          <Chart
            id="cta"
            title="CTA-2034"
            leftUnit="dB"
            rightUnit="dB"
            left={spl100}
            right={[45, 40, 35, 30, 25, 20, 15, 10, 5, 0, -5]}
            plotTop={17.5}
            plotH={225}
            height={256}
            divs={10}
            zy0={57}
            curves={ctaCurves}
          />
          <Chart
            id="filter"
            title="Filter"
            leftUnit="dB"
            rightUnit="deg"
            left={[10, 5, 0, -5, -10, -15, -20, -25, -30]}
            right={[180, 135, 90, 45, 0, -45, -90, -135, -180]}
            plotTop={17.5}
            plotH={225}
            height={256}
            divs={8}
            zy0={57}
            curves={filterCurves}
          />
          <Chart
            id="dirh"
            title="Directivity (hor)"
            leftUnit="dB"
            left={spl100}
            plotTop={16.5}
            plotH={227}
            height={258}
            divs={10}
            zy0={47}
            curves={dirHor}
          />
          <Chart
            id="dirn"
            title="Directivity (hor, neg front)"
            leftUnit="dB"
            left={spl100}
            plotTop={16.5}
            plotH={227}
            height={258}
            divs={10}
            zy0={47}
            curves={dirNeg}
          />
        </div>
      </div>
    </div>
  )
}
